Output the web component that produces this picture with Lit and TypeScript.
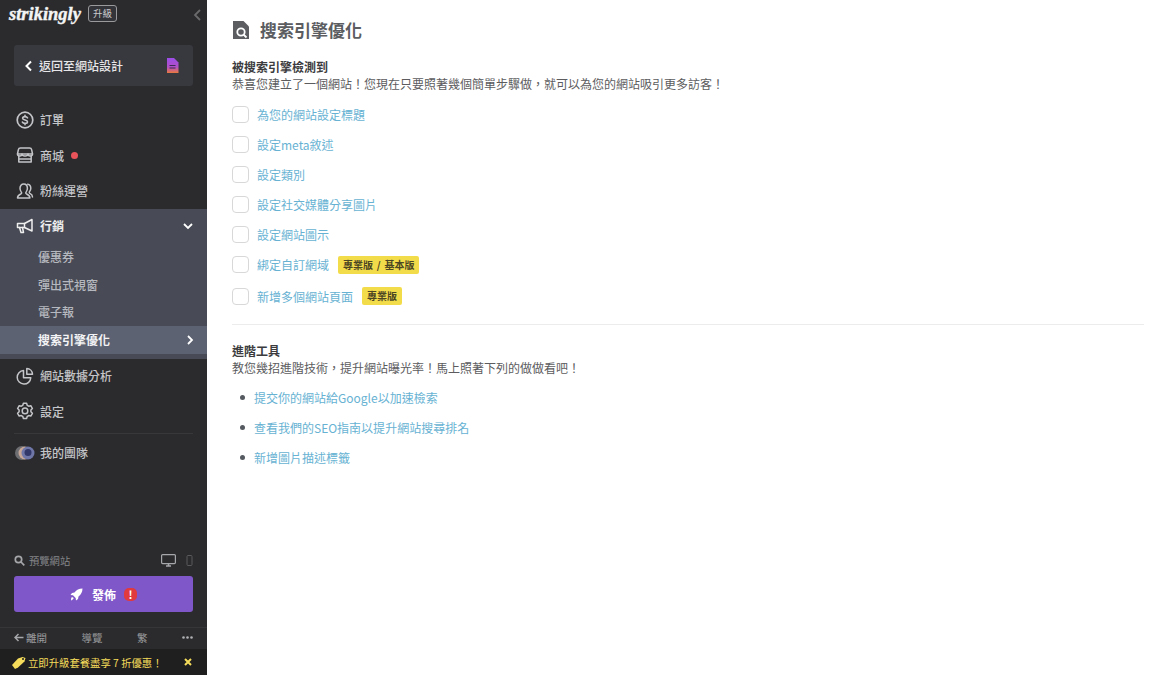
import { LitElement, html, css, svg } from "lit";
import { customElement } from "lit/decorators.js";

const stroke = (body: unknown, size = 18) => html`<svg class="ic" width=${size} height=${size} viewBox="0 0 18 18" fill="none" stroke="currentColor" stroke-width="1.500" stroke-linecap="round" stroke-linejoin="round">${body}</svg>`;

const icons = {
  orders: stroke(svg`<circle cx="9" cy="9" r="7.800" stroke-width="1.700"/><path stroke-width="1.600" d="M11.500 6.800C11.100 6 10.200 5.600 9 5.600c-1.400 0-2.400.6-2.400 1.700 0 2.400 4.900 1 4.900 3.400 0 1.100-1.100 1.700-2.500 1.700-1.200 0-2.200-.4-2.600-1.300M9 4.300v1.300M9 12.400v1.300"/>`),
  store: stroke(svg`<path d="M4.500 2h9c1.200 0 2 .8 2.200 1.800L16.500 8H1.500l.8-4.200C2.500 2.800 3.300 2 4.500 2z"/><path d="M1.500 8c0 1.200 1 2 2.300 2S6 9.200 6 8c0 1.200 1.400 2 3 2s3-.8 3-2c0 1.200 1 2 2.200 2s2.300-.8 2.300-2"/><path d="M2.800 10v6h12.400v-6M2.800 13h12.400"/>`),
  fans: stroke(svg`<path d="M1.500 16c0-2.600 1.700-3.300 3.400-4.100.9-.4.9-1.300.3-2C4.500 9 4 7.700 4 6.300 4 3.700 5.500 2 7.700 2s3.700 1.700 3.700 4.300c0 1.400-.5 2.700-1.200 3.600-.6.7-.6 1.600.3 2 1.700.8 3.400 1.500 3.400 4.100z"/><path d="M11.700 2.200c2 .3 3.100 1.900 3.100 4 0 1.400-.5 2.600-1.200 3.400-.5.600-.4 1.300.3 1.700 1.400.7 2.600 1.400 2.600 3.700"/>`),
  megaphone: stroke(svg`<path d="M1.500 6.500h7L16 2.500v11.500l-7.500-3.500h-7z"/><path d="M3.500 10.500L5 15.500h2.500L6.500 10.500M8.500 6.500v4"/>`),
  chart: stroke(svg`<path d="M7.500 3.500a6.800 6.800 0 1 0 7.300 7.300H7.500z"/><path d="M10.800 1.500a6 6 0 0 1 5.700 5.700h-5.700z"/>`),
  gear: stroke(svg`<path d="M7.400 1.300h3.200l.6 2 1.500.9 2.100-.5 1.600 2.800-1.500 1.500v1.800l1.500 1.500-1.600 2.800-2.100-.5-1.500.9-.6 2H7.400l-.6-2-1.500-.9-2.100.5-1.600-2.800 1.500-1.500V8l-1.500-1.500 1.600-2.800 2.100.5 1.500-.9z"/><circle cx="9" cy="8.900" r="2.800"/>`),
};

const checks: [string, string?][] = [
  ["為您的網站設定標題"],
  ["設定meta敘述"],
  ["設定類別"],
  ["設定社交媒體分享圖片"],
  ["設定網站圖示"],
  ["綁定自訂網域", "專業版 / 基本版"],
  ["新增多個網站頁面", "專業版"],
];
const links = ["提交你的網站給Google以加速檢索", "查看我們的SEO指南以提升網站搜尋排名", "新增圖片描述標籤"];

@customElement("app-root")
export class AppRoot extends LitElement {
  static styles = css`
    :host { display: flex; width: 1164px; height: 675px; overflow: hidden; background: #fff;
      font-family: "Noto Sans CJK TC", "Noto Sans", sans-serif; font-size: 12px; line-height: 17px; }
    * { box-sizing: border-box; }
    .side { width: 207px; flex: none; height: 675px; background: #2b2b2d; color: #c4c5c8; display: flex; flex-direction: column; }
    .top { height: 45px; display: flex; align-items: flex-start; padding: 3px 5px 0 9px; }
    .logo { font-family: "Liberation Serif", serif; font-style: italic; font-weight: 700; font-size: 18.500px; line-height: 22px; color: #f4f4f4; -webkit-text-stroke: .4px #f4f4f4; }
    .up { margin: 2px 0 0 7px; border: 1px solid #9a9a9c; border-radius: 3px; height: 17px; width: 29px; font-size: 9.500px; line-height: 15px; text-align: center; color: #c9c9cb; background: #33333a; }
    .collapse { margin: 6px 0 0 auto; }
    .back { margin: 0 14px; height: 41px; border-radius: 3px; background: #38393e; display: flex; align-items: center; padding: 0 14px 0 10px; color: #e6e6e8; font-weight: 500; gap: 6px; }
    .back .doc { margin-left: auto; }
    .menu { padding-top: 16px; }
    .item { height: 35.500px; display: flex; align-items: center; padding-left: 16px; gap: 6px; font-weight: 500; }
    .item.lift { padding-bottom: 1px; }
    .ic { flex: none; display: block; }
    .dot { width: 7px; height: 7px; border-radius: 50%; background: #e9535a; margin-left: 1px; }
    .mkt { background: #484b55; padding-bottom: 5px; color: #e8e8ea; }
    .mkt .item { height: 35px; color: #eeeeef; font-weight: 700; padding-bottom: 1px; }
    .mkt .chev { margin-left: auto; margin-right: 14px; }
    .sub { height: 27.500px; display: flex; align-items: center; padding: 0 13px 1px 38px; color: #b6b8bf; font-weight: 500; }
    .sub.on { background: #5c6271; color: #f4f4f6; font-weight: 700; justify-content: space-between; padding-bottom: 0; }
    .rule { height: 1px; background: #38383b; margin: 3px 14px 0; }
    .team { height: 38px; display: flex; align-items: center; padding-left: 15px; gap: 5px; font-weight: 500; }
    .team svg { flex: none; }
    .preview { margin-top: auto; height: 22px; display: flex; align-items: center; padding: 0 14px; gap: 4px; color: #85868a; font-size: 10.300px; }
    .preview .dev { margin-left: auto; display: flex; align-items: center; gap: 10px; }
    .pub { margin: 5px 14px 0; height: 36px; border-radius: 3px; background: #8057c8; color: #fff; font-weight: 700; display: flex; align-items: center; justify-content: center; gap: 8px; }
    .pub span { margin-left: 1px; }
    .excl { width: 13px; height: 13px; border-radius: 5px; background: #e03a3e; color: #fff; font-size: 11px; line-height: 13px; text-align: center; font-weight: 700; font-style: normal; }
    .foot { margin-top: 15px; height: 22px; border-top: 1px solid #363638; display: flex; align-items: center; padding: 0 14px 3px; color: #9a9b9e; font-size: 10.500px; justify-content: space-between; }
    .foot span { display: flex; align-items: center; gap: 2px; }
    .promo { height: 26px; background: #1f1f20; color: #f5dc5a; display: flex; align-items: center; padding: 0 15px 0 12px; font-size: 10.350px; gap: 2px; }
    .promo .x { margin-left: auto; }
    .main { flex: 1; padding: 0 20px 0 25px; color: #555; }
    .title { height: 58px; display: flex; align-items: center; gap: 11px; color: #5b5d61; font-size: 17px; font-weight: 700; padding-top: 1px; }
    h4 { margin: 0; font-size: 12px; line-height: 17px; font-weight: 700; color: #3c3c3e; }
    p { margin: 0; color: #5c5c5e; line-height: 17px; }
    .checks { padding-top: 7px; }
    .check { height: 30px; display: flex; align-items: center; }
    .check.tall { height: 31.500px; }
    .box { width: 17px; height: 17px; border: 1px solid #d8d8d8; border-radius: 4px; margin-right: 8px; flex: none; }
    a { color: #67b2d3; text-decoration: none; }
    .tag { margin-left: 9px; background: #f2dc4a; color: #4c4623; border-radius: 2px; font-size: 10px; font-weight: 700; height: 18px; line-height: 18px; padding: 0 5px; word-spacing: 1.500px; }
    hr { border: 0; height: 1px; background: #ececec; margin: 12px 0 17px; }
    ul { margin: 0; padding: 6px 0 0; list-style: none; }
    li { height: 30px; display: flex; align-items: center; padding-left: 8px; gap: 9px; }
    li::before { content: ""; width: 5px; height: 5px; border-radius: 50%; background: #555a60; }
  `;

  render() {
    return html`
      <aside class="side">
        <div class="top">
          <span class="logo">strikingly</span><span class="up">升級</span>
          <svg class="collapse" width="9" height="12" viewBox="0 0 9 12" fill="none" stroke="#6a6a6c" stroke-width="1.800"><path d="M7 1L2 6l5 5"/></svg>
        </div>
        <div class="back">
          <svg width="9" height="12" viewBox="0 0 9 12" fill="none" stroke="#fff" stroke-width="2"><path d="M7 1.500L2.500 6 7 10.500"/></svg>
          <span>返回至網站設計</span>
          <svg class="doc" width="13" height="15" viewBox="0 0 13 15">
            <defs><linearGradient id="dg" x1="0" y1="0" x2="0" y2="1"><stop offset="0" stop-color="#9b4de8"/><stop offset=".6" stop-color="#b24fc8"/><stop offset="1" stop-color="#e8793c"/></linearGradient></defs>
            <path d="M1 0h7l4.500 4.500V15H1z" fill="url(#dg)"/>
            <path d="M3.500 7.500h6M3.500 10h6" stroke="#3a2a55" stroke-width="1.200"/>
          </svg>
        </div>
        <div class="menu">
          <div class="item">${icons.orders}<span>訂單</span></div>
          <div class="item">${icons.store}<span>商城</span><i class="dot"></i></div>
          <div class="item">${icons.fans}<span>粉絲運營</span></div>
          <div class="mkt">
            <div class="item">${icons.megaphone}<span>行銷</span>
              <svg class="chev" width="10" height="8" viewBox="0 0 10 8" fill="none" stroke="#fff" stroke-width="1.800"><path d="M1 2l4 4 4-4"/></svg>
            </div>
            <div class="sub">優惠券</div>
            <div class="sub">彈出式視窗</div>
            <div class="sub">電子報</div>
            <div class="sub on"><span>搜索引擎優化</span>
              <svg width="8" height="10" viewBox="0 0 8 10" fill="none" stroke="#fff" stroke-width="1.800"><path d="M2 1l4 4-4 4"/></svg>
            </div>
          </div>
          <div class="item lift">${icons.chart}<span>網站數據分析</span></div>
          <div class="item lift">${icons.gear}<span>設定</span></div>
          <div class="rule"></div>
          <div class="team">
            <svg width="20" height="14" viewBox="0 0 20 14"><circle cx="7" cy="7" r="7" fill="#6d6e72"/><circle cx="10" cy="7" r="6.500" fill="#c7a898"/><circle cx="13" cy="7" r="6.500" fill="#6f76a8"/><circle cx="13" cy="6.500" r="3.500" fill="#33386a"/></svg>
            <span>我的團隊</span>
          </div>
        </div>
        <div class="preview">
          <svg width="11" height="11" viewBox="0 0 11 11" fill="none" stroke="#a6a7aa" stroke-width="1.700"><circle cx="4.500" cy="4.500" r="3.200"/><path d="M7 7l3.300 3.300"/></svg>
          <span>預覽網站</span>
          <span class="dev">
            <svg width="15" height="13" viewBox="0 0 15 13" fill="none" stroke="#a6a7aa" stroke-width="1.200"><rect x=".6" y=".6" width="13.800" height="9" rx="1"/><path d="M5 12h5M7.500 10v2" stroke-width="1.600"/></svg>
            <svg width="7" height="11" viewBox="0 0 7 11" fill="none" stroke="#5a5a5d"><rect x="1" y=".5" width="5" height="10" rx="1"/></svg>
          </span>
        </div>
        <div class="pub">
          <svg width="13" height="13" viewBox="0 0 13 13" fill="#fff"><path d="M12.500.5C9 .5 6.500 2 4.500 4.500L2 5 .5 7l2.500.300L5.700 10l.3 2.500L8 11l.500-2.500C11 6.500 12.500 4 12.500.5z"/><path d="M1.500 9.500c1-.5 1.700 0 2 .5.300.8-1 2-2.500 2.500.2-1.200 0-2.500.5-3z"/></svg>
          <span>發佈</span><i class="excl">!</i>
        </div>
        <div class="foot">
          <span><svg width="10" height="9" viewBox="0 0 10 9" fill="none" stroke="#a6a7aa" stroke-width="1.500"><path d="M4.500 1L1 4.500 4.500 8M1 4.500h8.500"/></svg>離開</span>
          <span>導覽</span><span>繁</span>
          <svg width="11" height="3" viewBox="0 0 11 3" fill="#b0b1b4"><circle cx="1.500" cy="1.500" r="1.300"/><circle cx="5.500" cy="1.500" r="1.300"/><circle cx="9.500" cy="1.500" r="1.300"/></svg>
        </div>
        <div class="promo">
          <svg width="14" height="13" viewBox="0 0 14 13" fill="#f5dc5a"><path d="M0 9l6-6.500 4.500-1.500 3 1-1 3.500-6.500 6L3 13z"/><circle cx="11" cy="3" r="1" fill="#1f1f20"/></svg>
          <span>立即升級套餐盡享 7 折優惠！</span>
          <svg class="x" width="8" height="8" viewBox="0 0 8 8" fill="none" stroke="#f5dc5a" stroke-width="2"><path d="M1 1l6 6M7 1L1 7"/></svg>
        </div>
      </aside>
      <main class="main">
        <div class="title">
          <svg width="17" height="19" viewBox="0 0 17 19"><path d="M1 1h10.500L17 6.500V19H1z" fill="#5b5d61"/><circle cx="9" cy="12" r="3.700" fill="none" stroke="#fff" stroke-width="1.800"/><path d="M11.500 14.500l3 3" stroke="#fff" stroke-width="1.800"/></svg>
          <span>搜索引擎優化</span>
        </div>
        <h4>被搜索引擎檢測到</h4>
        <p>恭喜您建立了一個網站！您現在只要照著幾個簡單步驟做，就可以為您的網站吸引更多訪客！</p>
        <div class="checks">
          ${checks.map(([t, tag]) => html`<div class="check ${tag ? "tall" : ""}"><i class="box"></i><a>${t}</a>${tag ? html`<span class="tag">${tag}</span>` : ""}</div>`)}
        </div>
        <hr />
        <h4>進階工具</h4>
        <p>教您幾招進階技術，提升網站曝光率！馬上照著下列的做做看吧！</p>
        <ul>${links.map((l) => html`<li><a>${l}</a></li>`)}</ul>
      </main>
    `;
  }
}
